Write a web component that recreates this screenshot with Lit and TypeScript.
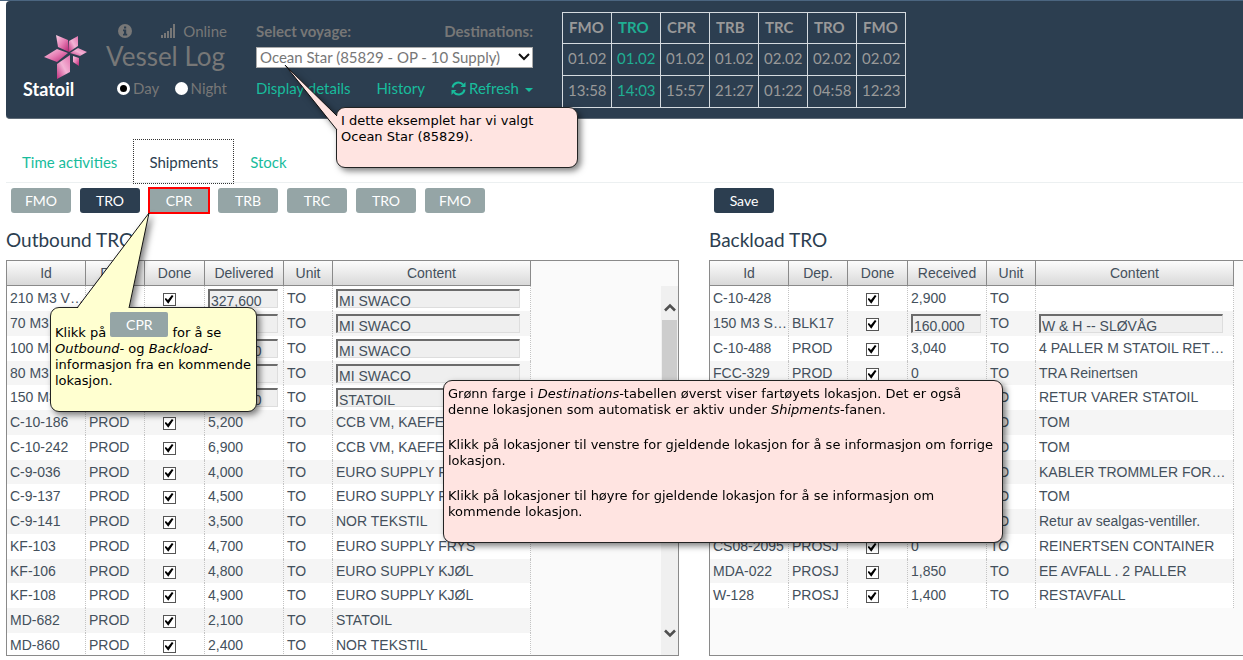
import { LitElement, html, svg, css, nothing } from "lit";
import { customElement, property } from "lit/decorators.js";
import { classMap } from "lit/directives/class-map.js";

interface Row {
  id: string;
  dep: string;
  qty: string;
  content: string;
  editable?: boolean;
}

const row = (id: string, dep: string, qty: string, content: string, editable = false): Row => ({
  id,
  dep,
  qty,
  content,
  editable,
});

const OUTBOUND: Row[] = [
  row("210 M3 V…", "", "327,600", "MI SWACO", true),
  row("70 M3", "", "", "MI SWACO", true),
  row("100 M3", "", "100,000", "MI SWACO", true),
  row("80 M3", "", "", "MI SWACO", true),
  row("150 M3", "", "150,000", "STATOIL", true),
  row("C-10-186", "PROD", "5,200", "CCB VM, KAEFER"),
  row("C-10-242", "PROD", "6,900", "CCB VM, KAEFER"),
  row("C-9-036", "PROD", "4,000", "EURO SUPPLY FRYS"),
  row("C-9-137", "PROD", "4,500", "EURO SUPPLY FRYS"),
  row("C-9-141", "PROD", "3,500", "NOR TEKSTIL"),
  row("KF-103", "PROD", "4,700", "EURO SUPPLY FRYS"),
  row("KF-106", "PROD", "4,800", "EURO SUPPLY KJØL"),
  row("KF-108", "PROD", "4,900", "EURO SUPPLY KJØL"),
  row("MD-682", "PROD", "2,100", "STATOIL"),
  row("MD-860", "PROD", "2,400", "NOR TEKSTIL"),
];

const BACKLOAD: Row[] = [
  row("C-10-428", "", "2,900", ""),
  row("150 M3 S…", "BLK17", "160,000", "W & H -- SLØVÅG", true),
  row("C-10-488", "PROD", "3,040", "4 PALLER M STATOIL RET…"),
  row("FCC-329", "PROD", "0", "TRA Reinertsen"),
  row("", "", "", "RETUR VARER STATOIL"),
  row("", "", "", "TOM"),
  row("", "", "", "TOM"),
  row("", "", "", "KABLER TROMMLER FOR…"),
  row("", "", "", "TOM"),
  row("", "", "", "Retur av sealgas-ventiller."),
  row("CS08-2095", "PROSJ", "0", "REINERTSEN CONTAINER"),
  row("MDA-022", "PROSJ", "1,850", "EE AVFALL . 2 PALLER"),
  row("W-128", "PROSJ", "1,400", "RESTAVFALL"),
];

const STOPS = [
  ["FMO", "01.02", "13:58"],
  ["TRO", "01.02", "14:03"],
  ["CPR", "01.02", "15:57"],
  ["TRB", "01.02", "21:27"],
  ["TRC", "02.02", "01:22"],
  ["TRO", "02.02", "04:58"],
  ["FMO", "02.02", "12:23"],
];
const CURRENT = 1;

const star = svg`
  <defs>
    <linearGradient id="petal" x1="0" y1="0" x2="1" y2="1">
      <stop offset="0" stop-color="#f9cfe4"></stop>
      <stop offset="0.5" stop-color="#e67db4"></stop>
      <stop offset="1" stop-color="#b3206f"></stop>
    </linearGradient>
    <linearGradient id="petal2" x1="1" y1="0" x2="0" y2="1">
      <stop offset="0" stop-color="#e472ae"></stop>
      <stop offset="0.5" stop-color="#f3b3d5"></stop>
      <stop offset="1" stop-color="#c2307f"></stop>
    </linearGradient>
  </defs>
  <path fill="url(#petal)" d="M12 0 L24 5 L25 17 L14 12 Z"></path>
  <path fill="url(#petal2)" d="M34 1 L34 11 L25 17 L25 6 Z"></path>
  <path fill="url(#petal)" d="M0 22 L13 14 L24 18 L13 27 Z"></path>
  <path fill="url(#petal2)" d="M43 17 L36 21 L26 18 L34 13 Z"></path>
  <path fill="url(#petal)" d="M29 21 L35 23 L35 31 L29 27 Z"></path>
  <path fill="url(#petal2)" d="M13 29 L26 20 L26 37 L13 44 Z"></path>
`;

@customElement("cargo-grid")
class CargoGrid extends LitElement {
  @property() qtyLabel = "";
  @property({ attribute: false }) rows: Row[] = [];
  @property({ type: Boolean }) scrollable = false;
  @property({ type: Boolean }) bleed = false;

  static styles = css`
    :host {
      display: block;
      min-width: 0;
      font: 14px/24px "Liberation Sans", Arial, sans-serif;
      color: #44505c;
    }
    .panel {
      display: flex;
      height: 394px;
      overflow: hidden;
      border: 1px solid #8a8a8a;
      background: #fafafa;
    }
    .bleed {
      border-right: 0;
    }
    .view {
      flex: 1;
      min-width: 0;
      overflow: hidden;
    }
    table {
      table-layout: fixed;
      width: 524px;
      border-collapse: separate;
      border-spacing: 0;
    }
    .c-id,
    .c-qty {
      width: 79px;
    }
    .c-dep {
      width: 59px;
    }
    .c-done {
      width: 60px;
    }
    .c-unit {
      width: 49px;
    }
    .c-content {
      width: 198px;
    }
    th,
    td {
      box-sizing: border-box;
      overflow: hidden;
      white-space: nowrap;
    }
    th {
      height: 25px;
      padding: 0;
      font-weight: 400;
      text-align: center;
      border-right: 1px solid #8a8a8a;
      border-bottom: 1px solid #8a8a8a;
      background: linear-gradient(#fcfcfc, #d9d9d9);
    }
    td {
      height: 25px;
      padding: 0 0 0 3px;
      line-height: 24px;
      vertical-align: top;
      background: #fff;
      border-right: 1px dotted #c4c4c4;
    }
    tr:nth-child(even) td {
      background: #f5f5f5;
    }
    tr:nth-child(4n) td {
      height: 24px;
    }
    .done {
      padding: 0;
      text-align: center;
    }
    .tick {
      appearance: none;
      display: inline-block;
      position: relative;
      box-sizing: border-box;
      width: 13px;
      height: 13px;
      margin: 7px 11px 0 0;
      vertical-align: top;
      border: 1px solid #555;
      background: #fff;
    }
    .tick:checked::before {
      content: "";
      position: absolute;
      inset: 1px;
      background: #000;
      clip-path: polygon(0 45%, 16% 32%, 38% 56%, 82% 0, 100% 12%, 42% 98%);
    }
    .field {
      box-sizing: border-box;
      display: block;
      height: 19px;
      margin: 3px 0 0;
      padding: 3px 0 0 1px;
      border: 1px solid #ddd;
      border-top: 2px solid #6c6c6c;
      border-left: 2px solid #6c6c6c;
      border-radius: 0;
      background: #efefef;
      font: inherit;
      line-height: 16px;
      color: inherit;
    }
    .qty {
      width: 70px;
    }
    .content {
      width: 184px;
    }
    .bar {
      display: flex;
      flex-direction: column;
      width: 17px;
      margin-top: 25px;
      background: #f0f0f0;
    }
    .up,
    .down {
      display: flex;
      justify-content: center;
      align-items: center;
      padding: 0;
      border: 0;
      background: none;
    }
    .up {
      height: 34px;
      padding-top: 8px;
    }
    .down {
      height: 44px;
    }
    .thumb {
      height: 160px;
      margin: 0 1px;
      background: #cdcdcd;
    }
    .space {
      flex: 1;
    }
  `;

  render() {
    return html`
      <div class=${classMap({ panel: true, bleed: this.bleed })}>
        <div class="view">
          <table>
            <colgroup>
              <col class="c-id" />
              <col class="c-dep" />
              <col class="c-done" />
              <col class="c-qty" />
              <col class="c-unit" />
              <col class="c-content" />
            </colgroup>
            <thead>
              <tr>
                <th>Id</th>
                <th>Dep.</th>
                <th>Done</th>
                <th>${this.qtyLabel}</th>
                <th>Unit</th>
                <th>Content</th>
              </tr>
            </thead>
            <tbody>
              ${this.rows.map(
                (r) => html`<tr>
                  <td>${r.id}</td>
                  <td>${r.dep}</td>
                  <td class="done"><input class="tick" type="checkbox" checked aria-label="Done" /></td>
                  <td>
                    ${r.editable
                      ? html`<input class="field qty" .value=${r.qty} aria-label=${this.qtyLabel} />`
                      : r.qty}
                  </td>
                  <td>TO</td>
                  <td>
                    ${r.editable
                      ? html`<input class="field content" .value=${r.content} aria-label="Content" />`
                      : r.content}
                  </td>
                </tr>`
              )}
            </tbody>
          </table>
        </div>
        ${this.scrollable
          ? html`<div class="bar">
              <button class="up" aria-label="Scroll up">
                <svg width="12" height="9" viewBox="0 0 12 9">
                  <path d="M1 7.5 L6 2.5 L11 7.5" fill="none" stroke="#505050" stroke-width="2.6"></path>
                </svg>
              </button>
              <div class="thumb"></div>
              <div class="space"></div>
              <button class="down" aria-label="Scroll down">
                <svg width="12" height="9" viewBox="0 0 12 9">
                  <path d="M1 1.5 L6 6.5 L11 1.5" fill="none" stroke="#505050" stroke-width="2.6"></path>
                </svg>
              </button>
            </div>`
          : nothing}
      </div>
    `;
  }
}

@customElement("app-root")
class AppRoot extends LitElement {
  static styles = css`
    :host {
      display: block;
      position: relative;
      min-height: 660px;
      overflow: hidden;
      background: #fff;
      font: 15px/20px Lato, sans-serif;
      color: #2c3e50;
    }
    a {
      color: #18bc9c;
      text-decoration: none;
    }
    .page {
      padding-left: 6px;
      border-top: 1px solid #4b6580;
    }
    header {
      display: flex;
      align-items: flex-start;
      padding: 11px 0 10px 16px;
      border-bottom: 1px solid #5f6b77;
      border-radius: 4px 0 0 4px;
      background: #2c3e50;
      color: #777;
    }
    .logo {
      width: 66px;
      margin: 22px 18px 0 0;
      color: #fff;
      font-size: 18px;
      line-height: 20px;
    }
    .logo svg {
      display: block;
      margin: 1px 0 0 22px;
    }
    .brand {
      padding-left: 1px;
      font-weight: 700;
    }
    .status,
    .voyage {
      display: grid;
      grid-template-rows: 24px 28px 34px;
      margin-top: 7px;
    }
    .status {
      width: 121px;
      margin-right: 29px;
    }
    .voyage {
      width: 277px;
      margin-right: 29px;
    }
    .line {
      display: flex;
      align-items: center;
      justify-content: space-between;
    }
    .online {
      display: flex;
      align-items: center;
      gap: 7px;
    }
    .info {
      margin-left: 12px;
    }
    h1 {
      margin: 0;
      font-size: 26px;
      line-height: 26px;
      font-weight: 400;
    }
    .mode {
      display: flex;
      align-items: center;
      gap: 3px;
      padding-left: 11px;
    }
    .night {
      padding-left: 0;
    }
    .radio {
      appearance: none;
      box-sizing: border-box;
      width: 13px;
      height: 13px;
      margin: 0;
      border: 3px solid #fff;
      border-radius: 50%;
      background: #fff;
    }
    .radio:checked {
      background: #000;
    }
    .strong {
      font-weight: 700;
    }
    select {
      box-sizing: border-box;
      appearance: none;
      width: 100%;
      height: 21px;
      padding: 0 0 0 3px;
      border: 1px solid #aaa;
      border-radius: 0;
      background: #fff;
      font: 15px/19px Lato, sans-serif;
      color: #777;
    }
    .pick {
      display: grid;
      align-items: center;
    }
    .pick select,
    .pick svg {
      grid-area: 1 / 1;
    }
    .pick svg {
      justify-self: end;
      margin-right: 3px;
      pointer-events: none;
    }
    .refresh {
      display: flex;
      align-items: center;
      gap: 3px;
    }
    .caret {
      margin: 4px 0 0 3px;
      border: 4px solid transparent;
      border-top-color: #18bc9c;
      border-bottom: 0;
    }
    .stops {
      border-collapse: collapse;
      color: #999;
      line-height: 20px;
    }
    .stops th,
    .stops td {
      box-sizing: border-box;
      width: 49px;
      height: 32px;
      padding: 0 0 3px 6px;
      text-align: left;
      white-space: nowrap;
      border: 1px solid #d5dbe0;
    }
    .stops td {
      padding-left: 5px;
    }
    .stops th {
      height: 31px;
    }
    .stops .now {
      color: #1fae93;
    }
    nav {
      display: flex;
      margin-top: 20px;
      border-bottom: 1px solid #ecf0f1;
    }
    nav a {
      padding: 12px 15px 11px;
      margin-bottom: -2px;
      border: 1px solid transparent;
      line-height: 20px;
    }
    nav .active {
      border: 1px dotted #333;
      color: #2c3e50;
    }
    .cols {
      display: grid;
      grid-template-columns: minmax(0, 673fr) minmax(0, 534fr);
      column-gap: 30px;
    }
    .buttons {
      display: flex;
      gap: 9px;
      padding: 5px 0 0 5px;
    }
    .btn {
      width: 60px;
      height: 25px;
      padding: 0;
      border: 0;
      border-radius: 3px;
      background: #95a5a6;
      font: 14px/25px Lato, sans-serif;
      color: #fff;
      text-align: center;
    }
    .dark {
      background: #2c3e50;
    }
    .marked {
      outline: 2px solid #f00;
      outline-offset: -1px;
      border-radius: 0;
    }
    h2 {
      margin: 15px 0 8px;
      font-size: 19px;
      line-height: 24px;
      font-weight: 400;
    }
    .callout {
      position: absolute;
      box-sizing: border-box;
      padding: 5px 4px;
      border: 1px solid #222;
      border-radius: 9px;
      background: #ffe4e1;
      filter: drop-shadow(3px 3px 3px rgba(0, 0, 0, 0.5));
      font: 13px/16px "DejaVu Sans", Verdana, sans-serif;
      color: #000;
    }
    .callout p {
      margin: 0 0 19px;
    }
    .tail {
      position: absolute;
      overflow: visible;
    }
    .c-voyage {
      left: 336px;
      top: 107px;
      width: 242px;
      height: 61px;
    }
    .c-voyage .tail {
      left: -53px;
      top: -44px;
    }
    .c-cpr {
      left: 50px;
      top: 307px;
      width: 207px;
      height: 105px;
      padding-top: 4px;
      background: #ffffd0;
    }
    .c-cpr .tail {
      left: 25px;
      top: -96px;
    }
    .c-dest {
      left: 443px;
      top: 380px;
      width: 560px;
      height: 163px;
    }
    .chip {
      display: inline-block;
      overflow: hidden;
      width: 58px;
      height: 25px;
      border-radius: 2px;
      background: #95a5a6;
      font: 14px/25px Lato, sans-serif;
      color: #fff;
      text-align: center;
    }
  `;

  render() {
    return html`
      <div class="page">
        <header>
          <div class="logo">
            <svg width="43" height="44" viewBox="0 0 43 44">${star}</svg>
            <div class="brand">Statoil</div>
          </div>
          <div class="status">
            <div class="line">
              <svg class="info" width="14" height="14" viewBox="0 0 14 14">
                <circle cx="7" cy="7" r="7" fill="#777"></circle>
                <path d="M5 5.5h3.2v4.3h1V11.5H5V9.8h1V7.2H5zM6 2.5h2.2v2H6z" fill="#2c3e50"></path>
              </svg>
              <span class="online">
                <svg width="15" height="14" viewBox="0 0 15 14" fill="#777">
                  <path d="M0 11h2v3H0zM3 9h2v5H3zM6 7h2v7H6zM9 4h2v10H9zM12 0h2v14h-2z"></path>
                </svg>
                Online
              </span>
            </div>
            <h1>Vessel Log</h1>
            <div class="line">
              <label class="mode"><input class="radio" type="radio" name="mode" checked />Day</label>
              <label class="mode night"><input class="radio" type="radio" name="mode" />Night</label>
            </div>
          </div>
          <div class="voyage">
            <div class="line strong">
              <label for="voyage">Select voyage:</label>
              <span>Destinations:</span>
            </div>
            <div class="pick">
              <select id="voyage">
                <option>Ocean Star (85829 - OP - 10 Supply)</option>
              </select>
              <svg width="12" height="8" viewBox="0 0 12 8">
                <path d="M1 1 L6 6 L11 1" fill="none" stroke="#111" stroke-width="2"></path>
              </svg>
            </div>
            <div class="line">
              <a href="#details">Display details</a>
              <a href="#history">History</a>
              <a class="refresh" href="#refresh">
                <svg width="15" height="15" viewBox="0 0 15 15" fill="none" stroke="#18bc9c" stroke-width="2">
                  <path d="M1.5 6.5 A6 6 0 0 1 12 3.6"></path>
                  <path d="M13.5 8.5 A6 6 0 0 1 3 11.4"></path>
                  <path d="M14.5 1 V6 H9.5 Z" fill="#18bc9c" stroke="none"></path>
                  <path d="M0.5 14 V9 H5.5 Z" fill="#18bc9c" stroke="none"></path>
                </svg>
                Refresh<span class="caret"></span>
              </a>
            </div>
          </div>
          <table class="stops">
            <thead>
              <tr>
                ${STOPS.map((s, i) => html`<th class=${classMap({ now: i === CURRENT })}>${s[0]}</th>`)}
              </tr>
            </thead>
            <tbody>
              ${[1, 2].map(
                (k) => html`<tr>
                  ${STOPS.map((s, i) => html`<td class=${classMap({ now: i === CURRENT })}>${s[k]}</td>`)}
                </tr>`
              )}
            </tbody>
          </table>
        </header>

        <nav>
          <a href="#time">Time activities</a>
          <a class="active" href="#shipments">Shipments</a>
          <a href="#stock">Stock</a>
        </nav>

        <main class="cols">
          <section>
            <div class="buttons">
              ${STOPS.map(
                (s, i) =>
                  html`<button class=${classMap({ btn: true, dark: i === CURRENT, marked: i === 2 })}>${s[0]}</button>`
              )}
            </div>
            <h2>Outbound TRO</h2>
            <cargo-grid qtyLabel="Delivered" .rows=${OUTBOUND} scrollable></cargo-grid>
          </section>
          <section>
            <div class="buttons"><button class="btn dark">Save</button></div>
            <h2>Backload TRO</h2>
            <cargo-grid qtyLabel="Received" .rows=${BACKLOAD} bleed></cargo-grid>
          </section>
        </main>
      </div>

      <aside class="callout c-voyage">
        <svg class="tail" width="56" height="68" viewBox="0 0 56 68">
          <path d="M54 53 L1 1 L54 67 Z" fill="#ffe4e1"></path>
          <path d="M53 52 L1 1 L53 66" fill="none" stroke="#111"></path>
        </svg>
        I dette eksemplet har vi valgt Ocean Star (85829).
      </aside>

      <aside class="callout c-cpr">
        <svg class="tail" width="76" height="98" viewBox="0 0 76 98">
          <path d="M1 97 L73 1 L53 97 Z" fill="#ffffd0"></path>
          <path d="M1 96 L73 1 L53 96" fill="none" stroke="#111"></path>
        </svg>
        Klikk på <span class="chip">CPR</span> for å se <i>Outbound-</i> og <i>Backload-</i> informasjon fra en
        kommende lokasjon.
      </aside>

      <aside class="callout c-dest">
        <p>
          Grønn farge i <i>Destinations</i>-tabellen øverst viser fartøyets lokasjon. Det er også denne lokasjonen som
          automatisk er aktiv under <i>Shipments</i>-fanen.
        </p>
        <p>Klikk på lokasjoner til venstre for gjeldende lokasjon for å se informasjon om forrige lokasjon.</p>
        <p>Klikk på lokasjoner til høyre for gjeldende lokasjon for å se informasjon om kommende lokasjon.</p>
      </aside>
    `;
  }
}
